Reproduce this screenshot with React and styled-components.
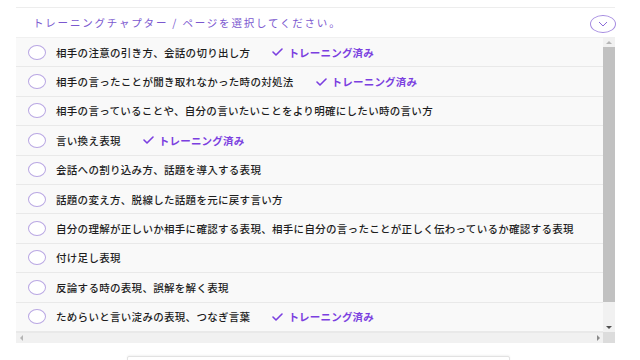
import React from "react";
import styled, { createGlobalStyle, css } from "styled-components";

const Global = createGlobalStyle`
  html, body {
    margin: 0;
    padding: 0;
    height: 360px;
    overflow: hidden;
    background: #ffffff;
    font-family: "Noto Sans CJK JP", "Noto Sans", sans-serif;
  }
`;

const Page = styled.div`
  width: 640px;
  padding: 7px 25px 0 16px;
  box-sizing: border-box;
`;

const Panel = styled.section`
  border-top: 1px solid #ededed;
  display: flex;
  flex-direction: column;
`;

const Header = styled.div`
  height: 30px;
  display: flex;
  align-items: center;
  justify-content: space-between;
  padding-left: 17px;
  border-bottom: 1px solid #f0f0f0;
  box-sizing: border-box;
`;

const HeaderTitle = styled.span`
  font-size: 10.5px;
  letter-spacing: 1.8px;
  color: #7b58cf;
  font-weight: 400;
`;

const ToggleButton = styled.button`
  width: 26px;
  height: 18px;
  margin-right: -1px;
  margin-top: 2px;
  border-radius: 50%;
  border: 1px solid #a58be0;
  background: #ffffff;
  display: flex;
  align-items: center;
  justify-content: center;
  padding: 0;
`;

const ScrollFrame = styled.div`
  display: grid;
  grid-template-columns: 1fr 12px;
  grid-template-rows: 294px 11px;
  background: #f9f9f9;
`;

const Viewport = styled.div`
  overflow: hidden;
`;

const VBar = styled.div`
  display: flex;
  flex-direction: column;
  background: #f1f1f1;
`;

const HBar = styled.div`
  display: flex;
  align-items: center;
  justify-content: space-between;
  background: #f1f1f1;
  border-top: 1px solid #e9e9e9;
  box-sizing: border-box;
`;

const Corner = styled.div`
  background: #dcdcdc;
`;

const ArrowBox = styled.div`
  flex: none;
  width: ${(p) => (p.$horizontal ? "10px" : "12px")};
  height: ${(p) => (p.$horizontal ? "10px" : "9px")};
  display: flex;
  align-items: center;
  justify-content: center;
`;

const Arrow = styled.span`
  width: 0;
  height: 0;
  ${(p) =>
    p.$dir === "up" &&
    css`
      border-left: 3px solid transparent;
      border-right: 3px solid transparent;
      border-bottom: 3px solid ${p.$color};
    `}
  ${(p) =>
    p.$dir === "down" &&
    css`
      border-left: 3px solid transparent;
      border-right: 3px solid transparent;
      border-top: 3px solid ${p.$color};
    `}
  ${(p) =>
    p.$dir === "left" &&
    css`
      border-top: 3px solid transparent;
      border-bottom: 3px solid transparent;
      border-right: 3px solid ${p.$color};
    `}
  ${(p) =>
    p.$dir === "right" &&
    css`
      border-top: 3px solid transparent;
      border-bottom: 3px solid transparent;
      border-left: 3px solid ${p.$color};
    `}
`;

const Track = styled.div`
  flex: 1;
  display: flex;
  flex-direction: column;
`;

const Thumb = styled.div`
  height: 92.4%;
  background: #c1c1c1;
`;

const List = styled.ul`
  list-style: none;
  margin: 0;
  padding: 0;
`;

const Row = styled.li`
  height: 29.4px;
  box-sizing: border-box;
  display: flex;
  align-items: center;
  padding-left: 12px;
  border-bottom: 1px solid #e9e9e9;
  white-space: nowrap;
`;

const Radio = styled.span`
  flex: none;
  width: 16px;
  height: 13px;
  border-radius: 50%;
  border: 1px solid #b9a7e3;
  background: #ffffff;
  margin-right: 10px;
`;

const Label = styled.span`
  font-size: 10.5px;
  letter-spacing: 0.3px;
  color: #1e1e1e;
  font-weight: 500;
`;

const Done = styled.span`
  display: inline-flex;
  align-items: center;
  gap: 5px;
  margin-left: 22px;
  font-size: 10.5px;
  letter-spacing: 0.2px;
  color: #7b3fe0;
  font-weight: 700;
`;

const Footer = styled.div`
  width: 381px;
  height: 40px;
  margin: 13px auto 0 auto;
  position: relative;
  left: 3px;
  border: 1px solid #e2e2e2;
  border-radius: 2px;
  box-shadow: 0 -1px 2px rgba(0, 0, 0, 0.05);
  background: #ffffff;
`;

const Check = () => (
  <svg width="11" height="8" viewBox="0 0 11 8">
    <polyline
      points="1,4 4,7 10,1"
      fill="none"
      stroke="#7b3fe0"
      strokeWidth="1.6"
      strokeLinecap="round"
      strokeLinejoin="round"
    />
  </svg>
);

const Chevron = () => (
  <svg width="10" height="6" viewBox="0 0 10 6">
    <polyline points="1,1 5,5 9,1" fill="none" stroke="#8a6ad8" strokeWidth="1" />
  </svg>
);

const chapters = [
  { title: "相手の注意の引き方、会話の切り出し方", done: true },
  { title: "相手の言ったことが聞き取れなかった時の対処法", done: true },
  { title: "相手の言っていることや、自分の言いたいことをより明確にしたい時の言い方", done: false },
  { title: "言い換え表現", done: true },
  { title: "会話への割り込み方、話題を導入する表現", done: false },
  { title: "話題の変え方、脱線した話題を元に戻す言い方", done: false },
  { title: "自分の理解が正しいか相手に確認する表現、相手に自分の言ったことが正しく伝わっているか確認する表現", done: false },
  { title: "付け足し表現", done: false },
  { title: "反論する時の表現、誤解を解く表現", done: false },
  { title: "ためらいと言い淀みの表現、つなぎ言葉", done: true },
];

export default function App() {
  return (
    <>
      <Global />
      <Page>
        <Panel>
          <Header>
            <HeaderTitle>トレーニングチャプター / ページを選択してください。</HeaderTitle>
            <ToggleButton aria-label="toggle">
              <Chevron />
            </ToggleButton>
          </Header>
          <ScrollFrame>
            <Viewport>
              <List>
                {chapters.map((c) => (
                  <Row key={c.title}>
                    <Radio />
                    <Label>{c.title}</Label>
                    {c.done && (
                      <Done>
                        <Check />
                        トレーニング済み
                      </Done>
                    )}
                  </Row>
                ))}
              </List>
            </Viewport>
            <VBar>
              <ArrowBox>
                <Arrow $dir="up" $color="#b5b5b5" />
              </ArrowBox>
              <Track>
                <Thumb />
              </Track>
              <ArrowBox>
                <Arrow $dir="down" $color="#505050" />
              </ArrowBox>
            </VBar>
            <HBar>
              <ArrowBox $horizontal>
                <Arrow $dir="left" $color="#b5b5b5" />
              </ArrowBox>
              <ArrowBox $horizontal>
                <Arrow $dir="right" $color="#8a8a8a" />
              </ArrowBox>
            </HBar>
            <Corner />
          </ScrollFrame>
        </Panel>
        <Footer />
      </Page>
    </>
  );
}
